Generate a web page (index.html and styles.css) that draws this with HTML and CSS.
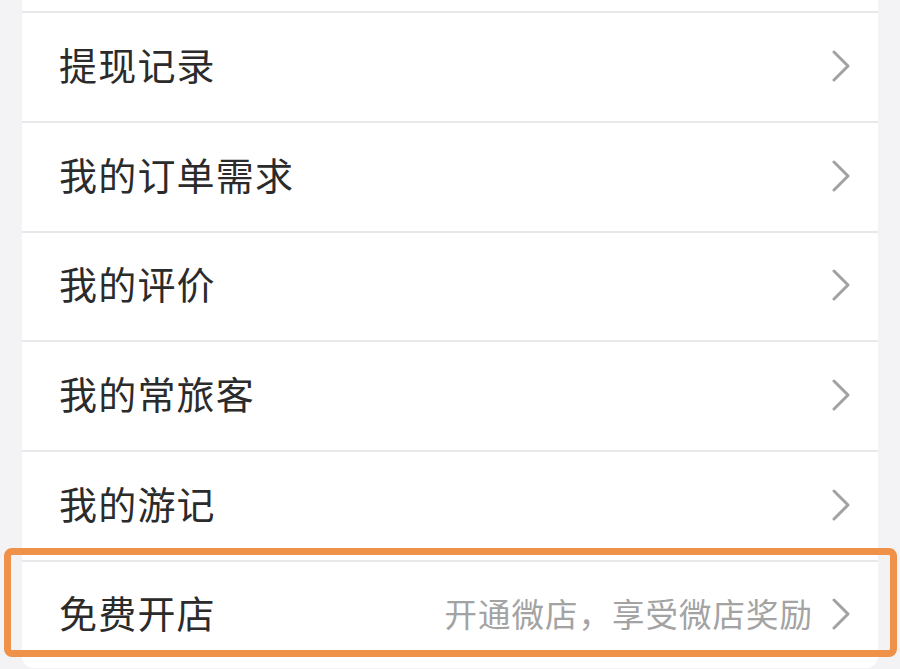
FILE: index.html
```html
<!DOCTYPE html>
<html lang="zh-CN">
<head>
<meta charset="UTF-8" />
<meta name="viewport" content="width=device-width, initial-scale=1" />
<title>我的</title>
<link rel="stylesheet" href="styles.css">
</head>
<body>
    <div class="page">
        <div class="menu-card">
            <div class="row-cut"></div>

            <div class="menu-row">
                <span class="menu-title">提现记录</span>
                <svg class="chevron" viewBox="0 0 18 32"><polyline points="2,2 16,16 2,30" /></svg>
            </div>

            <div class="menu-row">
                <span class="menu-title">我的订单需求</span>
                <svg class="chevron" viewBox="0 0 18 32"><polyline points="2,2 16,16 2,30" /></svg>
            </div>

            <div class="menu-row">
                <span class="menu-title">我的评价</span>
                <svg class="chevron" viewBox="0 0 18 32"><polyline points="2,2 16,16 2,30" /></svg>
            </div>

            <div class="menu-row">
                <span class="menu-title">我的常旅客</span>
                <svg class="chevron" viewBox="0 0 18 32"><polyline points="2,2 16,16 2,30" /></svg>
            </div>

            <div class="menu-row">
                <span class="menu-title">我的游记</span>
                <svg class="chevron" viewBox="0 0 18 32"><polyline points="2,2 16,16 2,30" /></svg>
            </div>

            <div class="menu-row menu-row-last">
                <span class="menu-title">免费开店</span>
                <span class="menu-hint">开通微店，享受微店奖励</span>
                <svg class="chevron" viewBox="0 0 18 32"><polyline points="2,2 16,16 2,30" /></svg>
                <!-- 강조 표시 -->
                <div class="highlight"></div>
            </div>
        </div>
    </div>
</body>
</html>
```

FILE: styles.css
```css
body {
    margin: 0;
    background: #f3f3f6;
    font-family: "Noto Sans CJK SC", "Noto Sans", sans-serif;
    height: 669px;
    overflow: hidden;
}

.page {
    padding: 0 22px;
}

.menu-card {
    position: relative;
    background: #ffffff;
    border-radius: 0 0 12px 12px;
}

.row-cut {
    height: 11px;
}

.menu-row {
    display: flex;
    align-items: center;
    height: 107.8px;
    border-top: 2px solid #e8e8ea;
    padding: 0 28px 0 37px;
}

.menu-title {
    flex: 1;
    font-size: 38px;
    line-height: 1;
    color: #2b2b2b;
    letter-spacing: 1.2px;
    margin-bottom: 6px;
}

.menu-hint {
    font-size: 32.5px;
    line-height: 1;
    color: #a3a3a3;
    margin-right: 19px;
    margin-bottom: 4px;
    letter-spacing: 1px;
}

.chevron {
    width: 18px;
    height: 32px;
    flex-shrink: 0;
    margin-bottom: 2px;
}

.chevron polyline {
    fill: none;
    stroke: #a2a2a2;
    stroke-width: 3;
    stroke-linecap: round;
    stroke-linejoin: round;
}

.menu-row-last {
    position: relative;
    height: 106px;
}

.highlight {
    position: absolute;
    top: -14px;
    left: -18px;
    right: -19px;
    height: 109px;
    box-sizing: border-box;
    border: 7px solid #ef9148;
    border-radius: 8px;
}
```
